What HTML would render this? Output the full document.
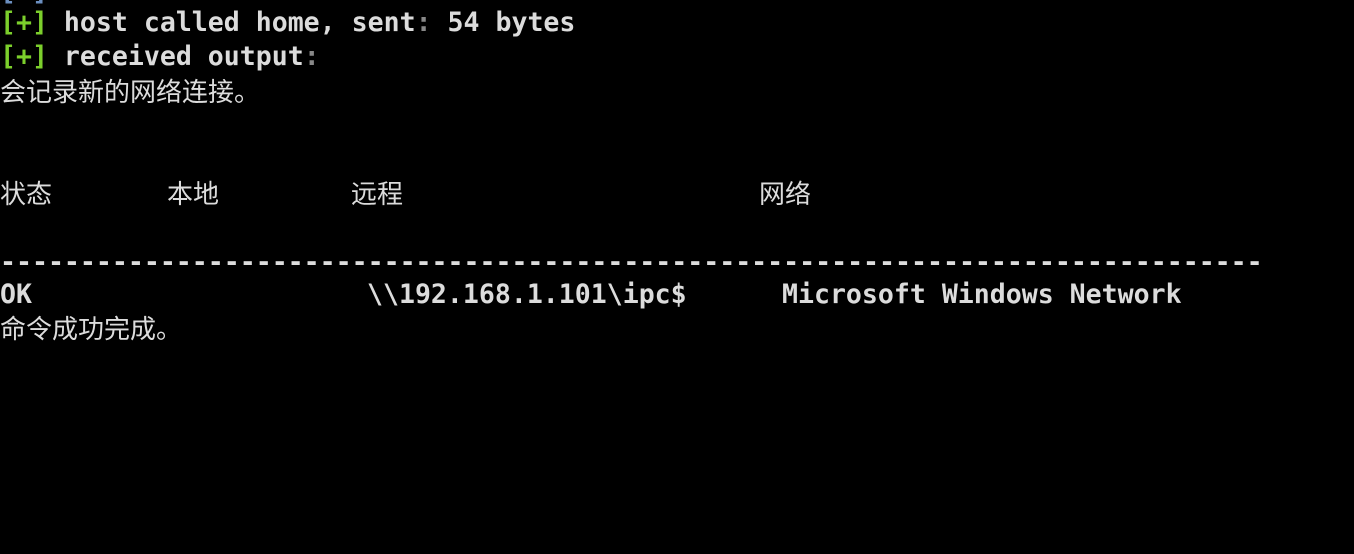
<!DOCTYPE html>
<html><head><meta charset="utf-8"><style>
html,body{margin:0;padding:0;background:#000;width:1354px;height:554px;overflow:hidden}
.l{position:absolute;white-space:pre;font-family:"DejaVu Sans Mono","Liberation Mono","Noto Sans CJK SC",monospace;font-weight:bold;font-size:26.55px;line-height:34px;color:#dcdcdc}
.c{font-family:"Noto Sans CJK SC","WenQuanYi Zen Hei",sans-serif;font-weight:normal;font-size:26px}
.g{color:#7ccf2c}
.b{color:#6b8fc0}
</style></head><body>
<div class="l b" style="left:0;top:-25px">[+]</div>
<div class="l" style="left:0;top:6px"><span class="g">[+]</span> host called home, sent<span style="color:#888">:</span> 54 bytes</div>
<div class="l" style="left:0;top:40px"><span class="g">[+]</span> received output<span style="color:#888">:</span></div>
<div class="l c" style="left:0;top:74px">会记录新的网络连接。</div>
<div class="l c" style="left:0;top:176px">状态</div>
<div class="l c" style="left:167px;top:176px">本地</div>
<div class="l c" style="left:351px;top:176px">远程</div>
<div class="l c" style="left:759px;top:176px">网络</div>
<div class="l" style="left:0;top:246px">-------------------------------------------------------------------------------</div>
<div class="l" style="left:0;top:278px">OK</div>
<div class="l" style="left:367px;top:278px">\\192.168.1.101\ipc$</div>
<div class="l" style="left:782px;top:278px">Microsoft Windows Network</div>
<div class="l c" style="left:0;top:311px">命令成功完成。</div>
</body></html>
